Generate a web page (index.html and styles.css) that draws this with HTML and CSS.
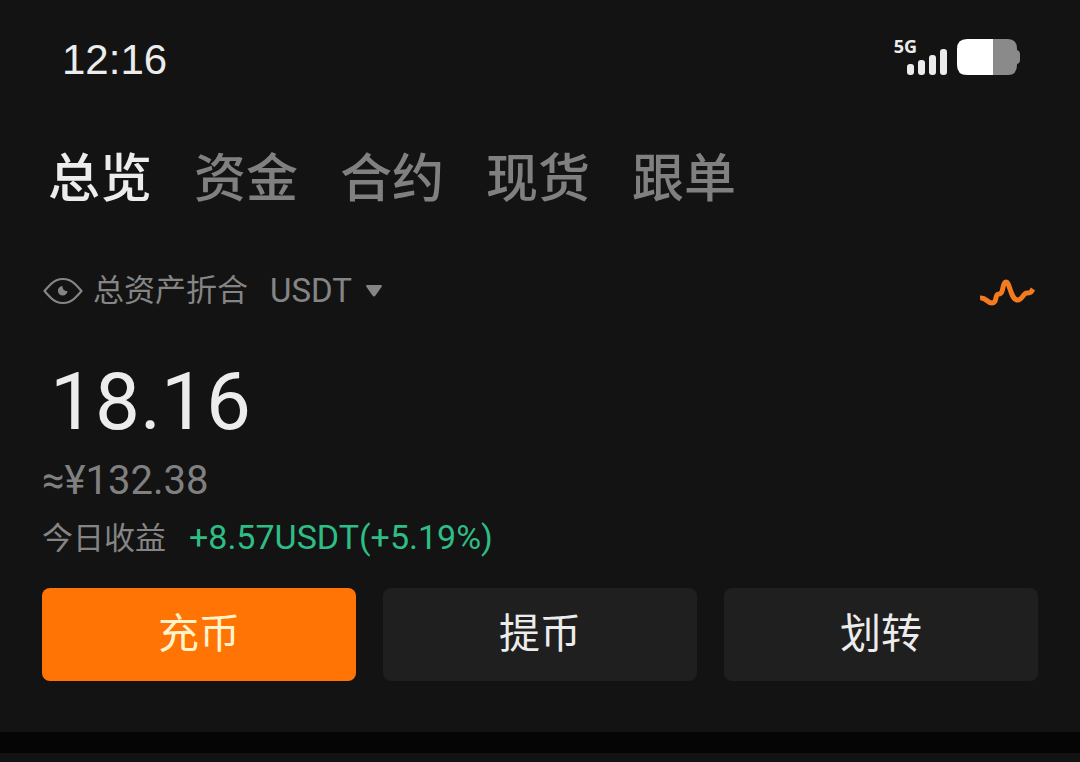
FILE: index.html
```html
<!DOCTYPE html>
<html lang="zh-CN">
<head>
<meta charset="utf-8">
<meta name="viewport" content="width=device-width, initial-scale=1">
<title>总览</title>
<link rel="stylesheet" href="styles.css">
</head>
<body>
<header class="status">
  <time class="clock">12:16</time>
  <div class="indicators">
    <div class="network">
      <span class="network-type">5G</span>
      <svg class="signal" width="40" height="26" viewBox="0 0 40 26" fill="#ececec" aria-hidden="true">
        <rect x="0" y="15" width="7" height="11" rx="3"/>
        <rect x="11" y="11" width="7" height="15" rx="3"/>
        <rect x="22" y="6" width="7" height="20" rx="3"/>
        <rect x="33" y="0" width="7" height="26" rx="3"/>
      </svg>
    </div>
    <svg class="battery" width="63" height="36" viewBox="0 0 63 36" aria-hidden="true">
      <path d="M36 0H51Q60 0 60 10V11Q63 12 63 15V21Q63 24 60 25V26Q60 36 51 36H36Z" fill="#8a8a8a"/>
      <path d="M36 0H10Q0 0 0 10V26Q0 36 10 36H36Z" fill="#fff"/>
    </svg>
  </div>
</header>
<main>
  <nav class="tabs">
    <a class="tab tab-active" href="#overview" aria-current="page">总览</a>
    <a class="tab" href="#funds">资金</a>
    <a class="tab" href="#futures">合约</a>
    <a class="tab" href="#spot">现货</a>
    <a class="tab" href="#copy">跟单</a>
  </nav>
  <section class="assets">
    <div class="assets-head">
      <button class="icon-button" type="button" aria-label="隐藏资产">
        <svg width="41" height="28" viewBox="0 0 41 28" aria-hidden="true">
          <path d="M2.500 14Q5 11 9 7Q14 2 21 2Q28 2 33 7Q37 11 39.500 14Q37 17 33 21Q28 26 21 26Q14 26 9 21Q5 17 2.500 14Z" fill="none" stroke="#858585" stroke-width="2.200" stroke-linejoin="round"/>
          <path d="M20.500 9C20.500 12 22 14 25.500 14A4.800 4.800 0 1 1 20.500 9Z" fill="#858585"/>
        </svg>
      </button>
      <span class="assets-label">总资产折合</span>
      <button class="currency" type="button">USDT
        <svg width="16" height="12" viewBox="0 0 16 12" aria-hidden="true"><path d="M1 0H15Q16.500 0 15.500 2L9.500 10.500Q8 12.500 6.500 10.500L.5 2Q-.5 0 1 0Z" fill="#858585"/></svg>
      </button>
      <button class="icon-button trend" type="button" aria-label="资产走势">
        <svg width="58" height="32" viewBox="0 0 58 32" fill="none" stroke="#f47a20" stroke-width="5" stroke-linejoin="round" aria-hidden="true">
          <path d="M0 23C6 22 7 28 12 28C18 28 14 19 19 19C24 19 22 7 26 7C30 7 30 23 37 25C42 26 43 18 47 18C51 18 51 17 53 14"/>
        </svg>
      </button>
    </div>
    <div class="balance">18.16</div>
    <div class="fiat">≈¥132.38</div>
    <div class="profit"><span>今日收益</span><span class="profit-value">+8.57USDT(+5.19%)</span></div>
    <div class="actions">
      <button class="action action-primary" type="button">充币</button>
      <button class="action" type="button">提币</button>
      <button class="action" type="button">划转</button>
    </div>
  </section>
</main>
<div class="divider"></div>
</body>
</html>
```
FILE: styles.css
```css
* { box-sizing: border-box; }
body {
  margin: 0;
  background: #131313;
  color: #ececec;
  font-family: Roboto, "Noto Sans CJK SC", sans-serif;
}
button {
  border: 0;
  padding: 0;
  background: none;
  color: inherit;
  font: inherit;
  cursor: pointer;
}
svg { display: block; }
.status {
  display: flex;
  justify-content: space-between;
  align-items: center;
  padding: 37px 60px 0 62px;
}
.clock {
  font-family: "Liberation Sans", sans-serif;
  font-size: 42px;
  line-height: 46px;
}
.indicators {
  display: flex;
  align-items: flex-start;
  gap: 10px;
  height: 42px;
}
.network {
  display: flex;
  flex-direction: column;
  align-items: flex-end;
}
.network-type {
  height: 10px;
  margin-right: 30px;
  font-family: "Noto Sans", sans-serif;
  font-size: 18px;
  font-weight: 700;
  line-height: 14px;
}
.tabs {
  display: flex;
  gap: 42px;
  padding: 65px 48px 0;
}
.tab {
  color: #808080;
  font-size: 52px;
  font-weight: 500;
  line-height: 64px;
  text-decoration: none;
}
.tab-active { color: #ececec; }
.assets { padding: 56px 42px 51px; }
.assets-head {
  display: flex;
  align-items: center;
  color: #858585;
  font-size: 31px;
  line-height: 46px;
}
.assets-label { margin: 0 22px 0 10px; }
.currency {
  display: flex;
  align-items: center;
  gap: 14px;
  font-size: 33px;
}
.trend { margin-left: auto; }
.balance {
  padding: 40px 8px 0;
  font-size: 80px;
  line-height: 96px;
}
.fiat {
  padding-top: 3px;
  color: #808080;
  font-size: 40px;
  line-height: 56px;
}
.profit {
  display: flex;
  align-items: baseline;
  gap: 23px;
  color: #858585;
  font-size: 31px;
  line-height: 56px;
}
.profit-value { color: #2ebd85; font-size: 34px; }
.actions {
  display: grid;
  grid-template-columns: repeat(3, 1fr);
  gap: 27px;
  padding-top: 21px;
}
.action {
  padding: 16px 0 17px;
  border-radius: 8px;
  background: #1f1f1f;
  font-size: 41px;
  line-height: 60px;
}
.action-primary { background: #ff7404; color: #fff3cc; }
.divider { height: 21px; background: #050505; }
```
